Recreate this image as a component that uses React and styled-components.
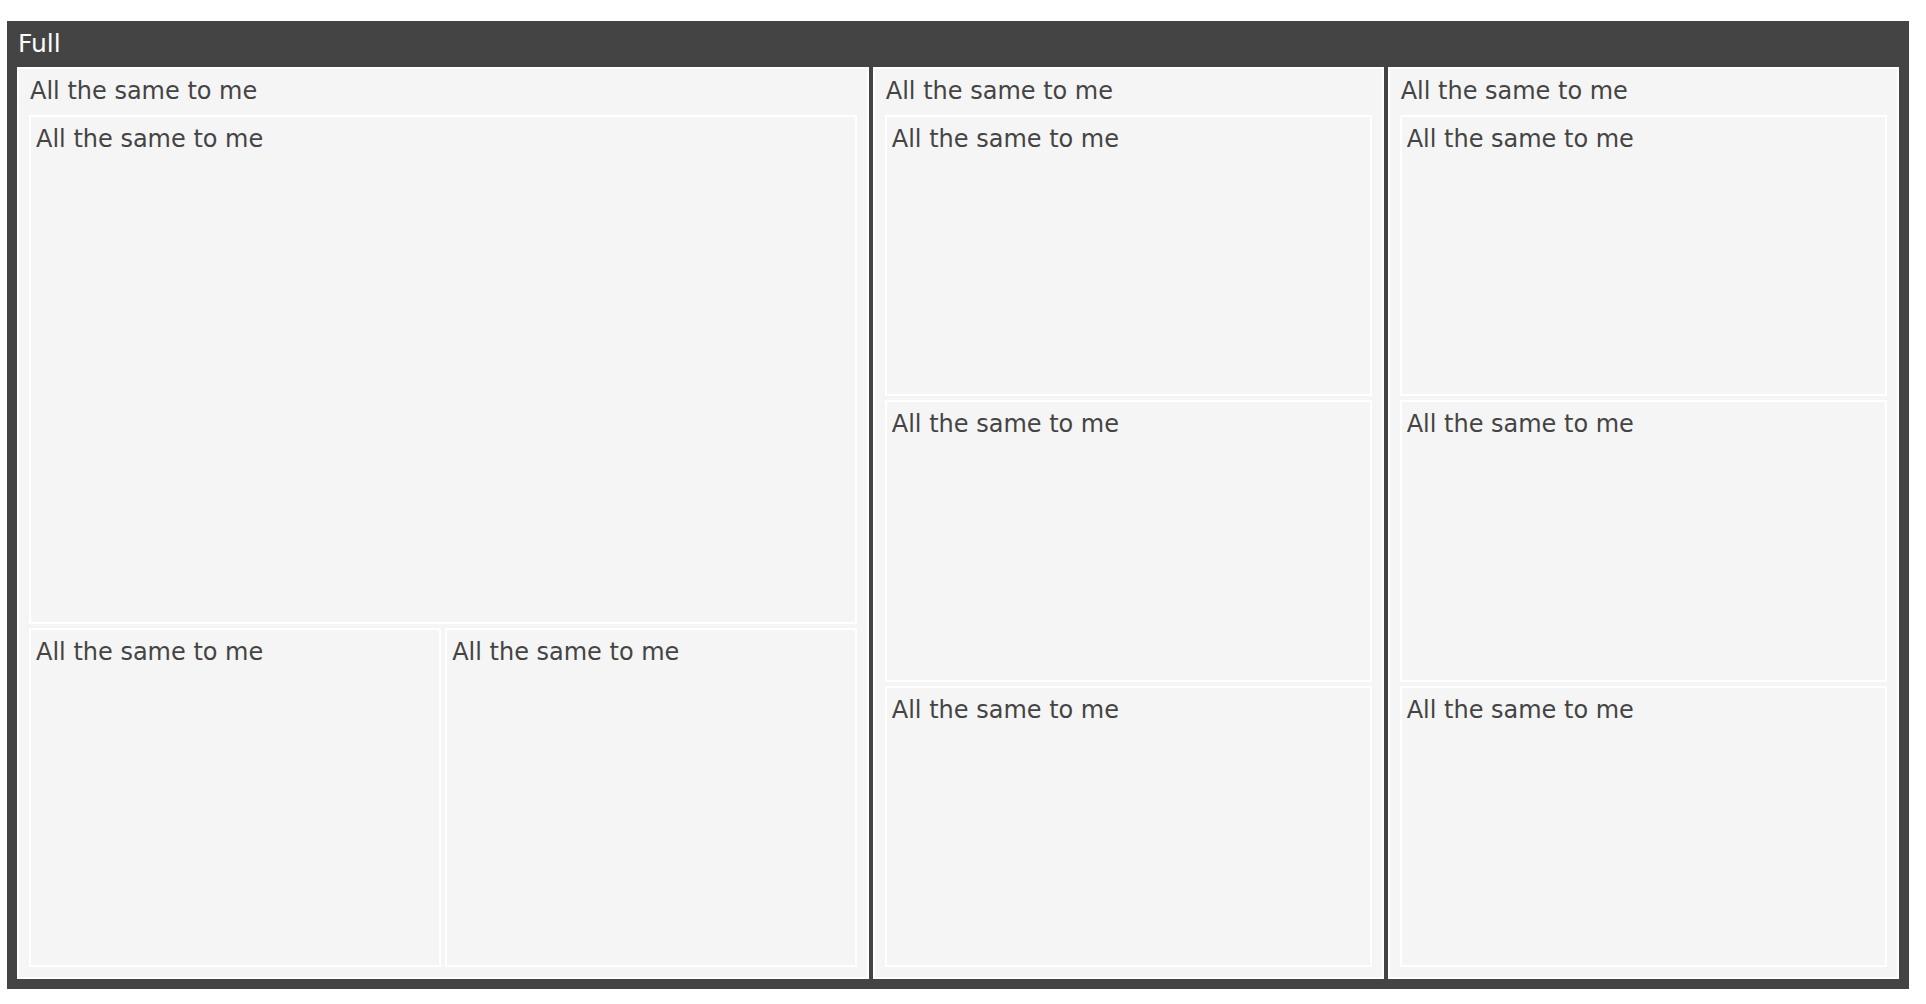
import React from "react";
import styled, { createGlobalStyle } from "styled-components";

const GlobalStyle = createGlobalStyle`
  html, body {
    margin: 0;
    padding: 0;
    background: #ffffff;
    font-family: "DejaVu Sans", Verdana, sans-serif;
  }
  * { box-sizing: border-box; }
`;

const Frame = styled.div`
  width: 1902px;
  margin: 21px 0 0 7px;
  background: #444444;
  padding: 0 10px 10px;
  display: flex;
  flex-direction: column;
`;

const Header = styled.div`
  height: 46px;
  padding: 8px 0 0 1px;
  color: #ffffff;
  font-size: 25px;
  line-height: 29px;
`;

const Columns = styled.div`
  display: grid;
  grid-template-columns: 5fr 3fr 3fr;
  column-gap: 3.5px;
  height: 912px;
`;

const Panel = styled.section`
  display: flex;
  flex-direction: column;
  min-width: 0;
  background: #f5f5f5;
  border: 2px solid #ffffff;
  padding: 8px 10px 10px;
`;

const PanelTitle = styled.div`
  font-size: 24px;
  line-height: 28px;
  color: #444444;
  padding-left: 1px;
  margin-bottom: 10px;
`;

const BoxGrid = styled.div`
  flex: 1;
  min-height: 0;
  display: grid;
  gap: 4px;
  grid-template-columns: ${(p) => p.$cols};
  grid-template-rows: ${(p) => p.$rows};
`;

const Box = styled.div`
  min-height: 0;
  min-width: 0;
  background: #f5f5f5;
  border: 2px solid #ffffff;
  padding: 8px 5px 5px;
  font-size: 24px;
  line-height: 28px;
  color: #444444;
  grid-column: ${(p) => (p.$wide ? "1 / -1" : "auto")};
`;

const LABEL = "All the same to me";

export default function App() {
  return (
    <>
      <GlobalStyle />
      <Frame>
        <Header>Full</Header>
        <Columns>
          <Panel>
            <PanelTitle>{LABEL}</PanelTitle>
            <BoxGrid $cols="1fr 1fr" $rows="3fr 2fr">
              <Box $wide>{LABEL}</Box>
              <Box>{LABEL}</Box>
              <Box>{LABEL}</Box>
            </BoxGrid>
          </Panel>
          {[0, 1].map((i) => (
            <Panel key={i}>
              <PanelTitle>{LABEL}</PanelTitle>
              <BoxGrid $cols="1fr" $rows="1fr 1fr 1fr">
                <Box>{LABEL}</Box>
                <Box>{LABEL}</Box>
                <Box>{LABEL}</Box>
              </BoxGrid>
            </Panel>
          ))}
        </Columns>
      </Frame>
    </>
  );
}
